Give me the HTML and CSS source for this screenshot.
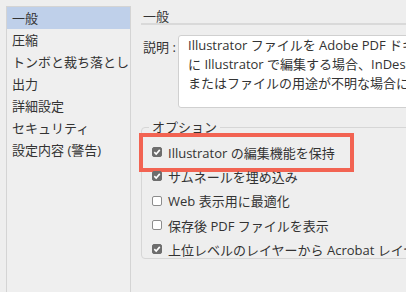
FILE: index.html
```html
<!DOCTYPE html>
<html lang="ja">
<head>
    <meta charset="UTF-8">
    <title>PDF 保存オプション</title>
    <link rel="stylesheet" href="styles.css">
</head>
<body>
    <div class="window">
        <ul class="sidebar">
            <li class="selected">一般</li>
            <li>圧縮</li>
            <li>トンボと裁ち落とし</li>
            <li>出力</li>
            <li>詳細設定</li>
            <li>セキュリティ</li>
            <li>設定内容 (警告)</li>
        </ul>

        <div class="content">
            <div class="section-title">一般</div>

            <div class="desc-row">
                <span class="desc-label">説明 :</span>
                <div class="desc-box">
                    <div>Illustrator ファイルを Adobe PDF ドキュメントとして保存します。後</div>
                    <div>に Illustrator で編集する場合、InDesign に配置する場合、</div>
                    <div>またはファイルの用途が不明な場合に使用します。</div>
                </div>
            </div>

            <fieldset class="options">
                <legend>オプション</legend>
                <div class="option">
                    <span class="mark"></span>
                    <span class="check checked"><svg viewBox="0 0 10 10"><path d="M2.3 5.2 L4.2 7 L7.8 2.9" /></svg></span>
                    Illustrator の編集機能を保持
                </div>
                <div class="option">
                    <span class="check checked"><svg viewBox="0 0 10 10"><path d="M2.3 5.2 L4.2 7 L7.8 2.9" /></svg></span>
                    サムネールを埋め込み
                </div>
                <div class="option">
                    <span class="check"></span>
                    Web 表示用に最適化
                </div>
                <div class="option">
                    <span class="check"></span>
                    保存後 PDF ファイルを表示
                </div>
                <div class="option">
                    <span class="check checked"><svg viewBox="0 0 10 10"><path d="M2.3 5.2 L4.2 7 L7.8 2.9" /></svg></span>
                    上位レベルのレイヤーから Acrobat レイヤーを作成
                </div>
            </fieldset>
        </div>
    </div>
</body>
</html>
```

FILE: styles.css
```css
body {
    margin: 0;
    background: #eeeeee;
    font-family: 'Open Sans', 'Noto Sans CJK JP', sans-serif;
    font-size: 13px;
    color: #333333;
    overflow: hidden;
}
.window {
    display: flex;
    height: 292px;
    overflow: hidden;
}
.sidebar {
    flex: none;
    box-sizing: border-box;
    width: 125px;
    height: 320px;
    margin: 6px 0 0 6px;
    padding: 0;
    list-style: none;
    border: 1px solid #d4d4d4;
    background: #efefef;
}
.sidebar li {
    height: 22px;
    line-height: 22px;
    padding-left: 5px;
    white-space: nowrap;
}
.sidebar li.selected {
    background: #bfd0ea;
}
.content {
    flex: none;
    width: 300px;
    margin-left: 10px;
}
.section-title {
    padding: 9px 0 0 2px;
    line-height: 14px;
    border-bottom: 2px solid #d9d9d9;
}
.desc-row {
    display: flex;
    margin-top: 10px;
}
.desc-label {
    flex: none;
    width: 35px;
    padding: 5px 0 0 2px;
    line-height: 14px;
}
.desc-box {
    flex: 1;
    box-sizing: border-box;
    height: 73px;
    padding: 0 0 0 9px;
    background: white;
    border: 1px solid #d0d0d0;
    border-radius: 3px;
    line-height: 19px;
    white-space: nowrap;
    overflow: hidden;
}
.options {
    box-sizing: border-box;
    height: 139px;
    margin: 12px 0 0 0;
    padding: 6px 0 0 10px;
    border: 1px solid #d6d6d6;
    border-radius: 4px;
    min-width: 0;
}
.options legend {
    margin-left: -3px;
    padding: 0 3px;
    line-height: 14px;
}
.option {
    position: relative;
    display: flex;
    align-items: center;
    height: 24.3px;
    white-space: nowrap;
}
.check {
    flex: none;
    box-sizing: border-box;
    width: 10px;
    height: 10px;
    margin-right: 6px;
    background: white;
    border: 1px solid #8c8c8c;
    border-radius: 2px;
}
.check.checked {
    background: #6d6d6d;
    border-color: #6d6d6d;
}
.check svg {
    display: block;
    width: 10px;
    height: 10px;
    margin: -1px;
    fill: none;
    stroke: white;
    stroke-width: 1.6;
}
.mark {
    position: absolute;
    left: -13px;
    top: -7px;
    box-sizing: border-box;
    width: 215px;
    height: 39px;
    border: 4px solid #f26352;
}
```
